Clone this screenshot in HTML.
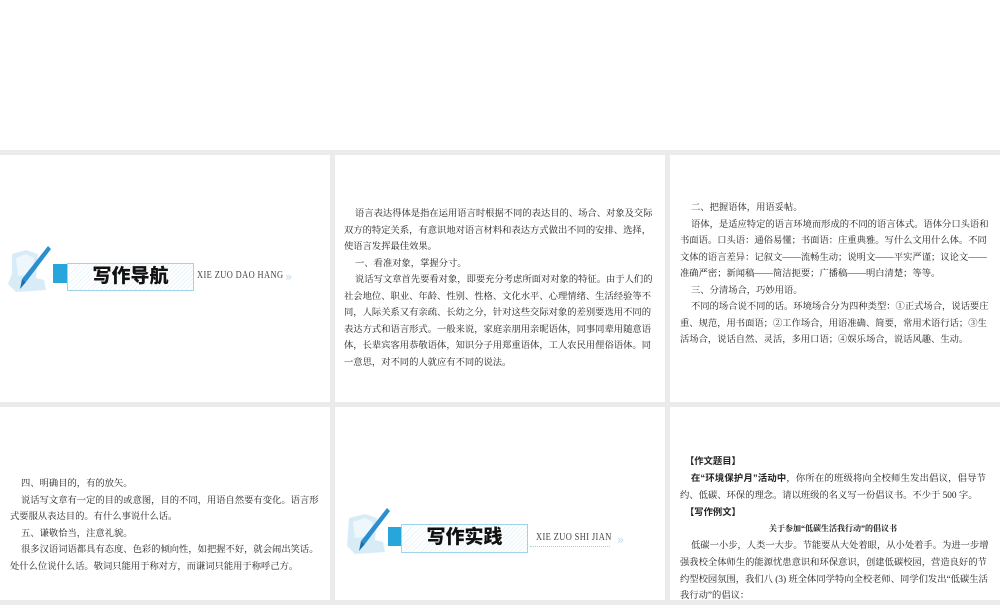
<!DOCTYPE html>
<html><head><meta charset="utf-8"><style>
*{margin:0;padding:0;box-sizing:border-box}
body{width:1000px;height:600px;background:#ebebeb;position:relative;overflow:hidden;font-family:"Liberation Serif","Noto Serif CJK SC",serif;color:#333}
.p{position:absolute;background:#fff;overflow:hidden}
.t{position:absolute;font-size:9.3px;line-height:16.5px;text-align:justify;text-align-last:justify;color:#222}
.t div{white-space:nowrap}
.t .i{padding-left:11px}
.t .l{text-align-last:left}
.box{position:absolute;border:1.5px solid #9fd3ea;background:repeating-linear-gradient(135deg,#fff 0 2px,#eaf5fa 2px 3px);}
.box span{position:absolute;left:0;right:0;top:0;text-align:center;font-family:"Liberation Sans","Noto Sans CJK SC",sans-serif;font-weight:900;font-size:19px;line-height:26px;color:#111}
.sq{position:absolute;background:#27a6dc}
.lat{position:absolute;font-family:"Liberation Serif",serif;font-size:10.5px;color:#444;transform:scaleX(0.8);transform-origin:left;white-space:nowrap;letter-spacing:0.5px}
.hd{font-family:"Liberation Sans","Noto Sans CJK SC",sans-serif;font-weight:bold;color:#222}
</style></head><body>
<div class="p" style="left:0;top:0;width:1000px;height:150px"></div>
<div class="p" style="left:0;top:155px;width:330px;height:247px"></div>
<div class="p" style="left:335px;top:155px;width:330px;height:247px"></div>
<div class="p" style="left:670px;top:155px;width:330px;height:247px"></div>
<div class="p" style="left:0;top:407px;width:330px;height:193px"></div>
<div class="p" style="left:335px;top:407px;width:330px;height:193px"></div>
<div class="p" style="left:670px;top:407px;width:330px;height:193px"></div>

<!-- banner 1 -->
<svg style="position:absolute;left:4px;top:244px" width="50" height="50" viewBox="0 0 50 50">
<path d="M8 10 L22 6 L34 10 L32 34 L40 36 L42 46 L12 48 L4 40 L8 30 Z" fill="#d8ecf7"/>
<path d="M12 14 L22 10 L30 14 L28 30 L14 32 Z" fill="#eef7fc"/>
<path d="M44 2 L47 5 L22 38 L18 35 Z" fill="#2b8fcf"/>
<path d="M18 35 L22 38 L16 45 Z" fill="#1e6fa8"/>
</svg>
<div class="sq" style="left:53px;top:264px;width:14px;height:19px"></div>
<div class="box" style="left:67px;top:263px;width:127px;height:28px"><span>写作导航</span></div>
<div class="lat" style="left:197px;top:270px">XIE ZUO DAO HANG</div>
<div style="position:absolute;left:285px;top:270px;color:#b9def0;font-size:12px;font-family:'DejaVu Sans'">»</div>

<!-- banner 2 -->
<svg style="position:absolute;left:343px;top:506px" width="50" height="50" viewBox="0 0 50 50">
<path d="M6 12 L22 8 L34 12 L32 34 L40 36 L42 46 L12 48 L4 40 Z" fill="#d8ecf7"/>
<path d="M10 16 L22 12 L30 16 L28 30 L12 32 Z" fill="#eef7fc"/>
<path d="M44 2 L47 5 L22 38 L18 35 Z" fill="#2b8fcf"/>
<path d="M18 35 L22 38 L16 45 Z" fill="#1e6fa8"/>
</svg>
<div class="sq" style="left:388px;top:527px;width:14px;height:19px"></div>
<div class="box" style="left:401px;top:524px;width:127px;height:29px"><span>写作实践</span></div>
<div class="lat" style="left:536px;top:532px">XIE ZUO SHI JIAN</div>
<div style="position:absolute;left:530px;top:546px;width:80px;border-top:1px dotted #9fd3ea"></div>
<div style="position:absolute;left:617px;top:533px;color:#b9def0;font-size:12px;font-family:'DejaVu Sans'">»</div>

<!-- panel 2 text -->
<div class="t" style="left:344px;top:206px;width:307px">
<div class="i">语言表达得体是指在运用语言时根据不同的表达目的、场合、对象及交际</div>
<div>双方的特定关系，有意识地对语言材料和表达方式做出不同的安排、选择，</div>
<div class="l">使语言发挥最佳效果。</div>
<div class="i l">一、看准对象，掌握分寸。</div>
<div class="i">说话写文章首先要看对象，即要充分考虑所面对对象的特征。由于人们的</div>
<div>社会地位、职业、年龄、性别、性格、文化水平、心理情绪、生活经验等不</div>
<div>同，人际关系又有亲疏、长幼之分，针对这些交际对象的差别要选用不同的</div>
<div>表达方式和语言形式。一般来说，家庭亲朋用亲昵语体，同事同辈用随意语</div>
<div>体，长辈宾客用恭敬语体，知识分子用郑重语体，工人农民用俚俗语体。同</div>
<div class="l">一意思，对不同的人就应有不同的说法。</div>
</div>

<!-- panel 3 text -->
<div class="t" style="left:680px;top:200px;width:305px">
<div class="i l">二、把握语体，用语妥帖。</div>
<div class="i">语体，是适应特定的语言环境而形成的不同的语言体式。语体分口头语和</div>
<div>书面语。口头语：通俗易懂；书面语：庄重典雅。写什么文用什么体。不同</div>
<div>文体的语言差异：记叙文——流畅生动；说明文——平实严谨；议论文——</div>
<div class="l">准确严密；新闻稿——简洁扼要；广播稿——明白清楚；等等。</div>
<div class="i l">三、分清场合，巧妙用语。</div>
<div class="i">不同的场合说不同的话。环境场合分为四种类型：①正式场合，说话要庄</div>
<div>重、规范，用书面语；②工作场合，用语准确、简要，常用术语行话；③生</div>
<div class="l">活场合，说话自然、灵活，多用口语；④娱乐场合，说话风趣、生动。</div>
</div>

<!-- panel 4 text -->
<div class="t" style="left:10px;top:476px;width:306px">
<div class="i l">四、明确目的，有的放矢。</div>
<div class="i">说话写文章有一定的目的或意图，目的不同，用语自然要有变化。语言形</div>
<div class="l">式要服从表达目的。有什么事说什么话。</div>
<div class="i l">五、谦敬恰当，注意礼貌。</div>
<div class="i">很多汉语词语都具有态度、色彩的倾向性，如把握不好，就会闹出笑话。</div>
<div class="l">处什么位说什么话。敬词只能用于称对方，而谦词只能用于称呼己方。</div>
</div>

<!-- panel 6 text -->
<div class="t" style="left:680px;top:453px;width:306px;line-height:16.8px">
<div class="l hd" style="padding-left:5px">【作文题目】</div>
<div class="i"><b class="hd">在“环境保护月”活动中</b>，你所在的班级将向全校师生发出倡议，倡导节</div>
<div class="l">约、低碳、环保的理念。请以班级的名义写一份倡议书。不少于 500 字。</div>
<div class="l hd" style="padding-left:5px">【写作例文】</div>
<div style="text-align:center;text-align-last:center;font-size:8px;font-weight:bold">关于参加“低碳生活我行动”的倡议书</div>
<div class="i">低碳一小步，人类一大步。节能要从大处着眼，从小处着手。为进一步增</div>
<div>强我校全体师生的能源忧患意识和环保意识，创建低碳校园，营造良好的节</div>
<div>约型校园氛围，我们八 (3) 班全体同学特向全校老师、同学们发出“低碳生活</div>
<div class="l">我行动”的倡议：</div>
</div>
</body></html>
